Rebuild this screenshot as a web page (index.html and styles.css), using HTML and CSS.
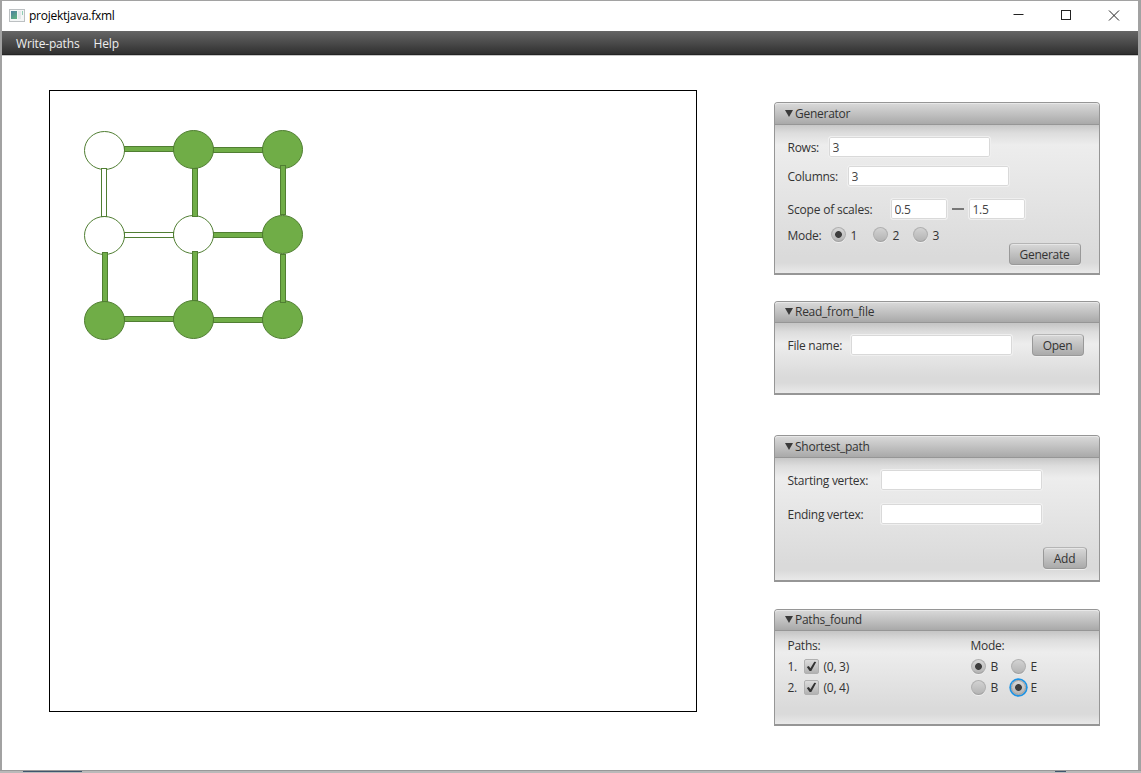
FILE: index.html
```html
<!DOCTYPE html>
<html lang="en">
<head>
<meta charset="utf-8">
<title>projektjava.fxml</title>
<link rel="stylesheet" href="styles.css">
</head>
<body>
<div class="window">
  <header class="titlebar">
    <svg class="app-icon" width="16" height="13" viewBox="0 0 16 13"><defs><linearGradient id="ic" x2="0.6" y2="1"><stop offset="0" stop-color="#4b7f9e"/><stop offset="1" stop-color="#5fae83"/></linearGradient></defs><rect x=".5" y=".5" width="15" height="12" fill="#f4f6f6" stroke="#bcc0c2"/><rect x="2" y="2" width="6" height="8" fill="url(#ic)"/><rect x="9" y="2" width="3" height="8" fill="#e3e8ea"/><rect x="13" y="2" width="1" height="4" fill="#8fcfb4"/></svg>
    <span class="app-name">projektjava.fxml</span>
    <svg class="controls" width="120" height="14" viewBox="0 0 120 14" fill="none" stroke="#222" stroke-width="1"><path d="M0.500 5.500H10.500"/><rect x="48.500" y="1.500" width="9" height="9"/><path d="M96 1.500L106 11.500M106 1.500L96 11.500"/></svg>
  </header>
  <nav class="menubar"><span>Write-paths</span><span>Help</span></nav>
  <main class="content">
    <section class="board">
      <svg width="646" height="620" viewBox="50 91 646 620">
        <g class="node">
          <ellipse class="open" cx="104.500" cy="150.500" rx="20" ry="19"/>
          <ellipse cx="193.500" cy="149.500" rx="20" ry="19"/>
          <ellipse cx="282.500" cy="149.500" rx="20" ry="19"/>
          <ellipse class="open" cx="104.500" cy="235.500" rx="20" ry="19"/>
          <ellipse class="open" cx="193.500" cy="234.500" rx="20" ry="19"/>
          <ellipse cx="282.500" cy="234.500" rx="20" ry="19"/>
          <ellipse cx="104.500" cy="320.500" rx="20" ry="19"/>
          <ellipse cx="193.500" cy="319.500" rx="20" ry="19"/>
          <ellipse cx="282.500" cy="319.500" rx="20" ry="19"/>
        </g>
        <g class="edge">
          <rect x="124.500" y="146.500" width="49" height="5"/>
          <rect x="213.500" y="147.500" width="49" height="5"/>
          <rect class="open" x="124.500" y="232.500" width="49" height="5"/>
          <rect x="213.500" y="232.500" width="49" height="5"/>
          <rect x="124.500" y="316.500" width="49" height="5"/>
          <rect x="213.500" y="317.500" width="49" height="5"/>
          <rect class="open" x="101.500" y="168.500" width="5" height="48"/>
          <rect x="192.500" y="168.500" width="5" height="48"/>
          <rect x="280.500" y="165.500" width="5" height="49"/>
          <rect x="102.500" y="252.500" width="5" height="49"/>
          <rect x="192.500" y="251.500" width="5" height="49"/>
          <rect x="280.500" y="254.500" width="5" height="48"/>
        </g>
      </svg>
    </section>
    <aside class="side">
      <section class="panel generator">
        <h2><i class="tri"></i>Generator</h2>
        <div class="row r-rows"><label class="w-rows">Rows:</label><input class="field" value="3"></div>
        <div class="row r-cols"><label class="w-cols">Columns:</label><input class="field" value="3"></div>
        <div class="row r-scope"><label class="w-scope">Scope of scales:</label><input class="field short" value="0.5"><i class="dash"></i><input class="field short" value="1.5"></div>
        <div class="row r-mode"><label class="w-mode">Mode:</label><i class="radio on"></i><span class="opt">1</span><i class="radio"></i><span class="opt two">2</span><i class="radio"></i><span class="opt">3</span></div>
        <div class="row r-gen"><button class="b-gen">Generate</button></div>
      </section>
      <section class="panel reader">
        <h2><i class="tri"></i>Read_from_file</h2>
        <div class="row r-file"><label class="w-file">File name:</label><input class="field"><button class="b-open">Open</button></div>
      </section>
      <section class="panel shortest">
        <h2><i class="tri"></i>Shortest_path</h2>
        <div class="row r-start"><label class="w-vertex">Starting vertex:</label><input class="field"></div>
        <div class="row r-end"><label class="w-vertex">Ending vertex:</label><input class="field"></div>
        <div class="row r-add"><button class="b-add">Add</button></div>
      </section>
      <section class="panel found">
        <h2><i class="tri"></i>Paths_found</h2>
        <div class="row r-head"><span class="w-paths">Paths:</span><span>Mode:</span></div>
        <div class="row r-path"><span class="num">1.</span><i class="check"><svg width="15" height="15" viewBox="0 0 15 15"><path d="M2.800 8L4.800 6.900L6.400 9.300L10.300 2.800L12.200 3.100L7.300 12H5.600Z"/></svg></i><span class="pair">(0, 3)</span><i class="radio on"></i><span class="opt be">B</span><i class="radio"></i><span class="opt">E</span></div>
        <div class="row r-path"><span class="num">2.</span><i class="check"><svg width="15" height="15" viewBox="0 0 15 15"><path d="M2.800 8L4.800 6.900L6.400 9.300L10.300 2.800L12.200 3.100L7.300 12H5.600Z"/></svg></i><span class="pair">(0, 4)</span><i class="radio"></i><span class="opt be">B</span><i class="radio on focus"></i><span class="opt">E</span></div>
      </section>
    </aside>
  </main>
</div>
<footer class="desktop-edge"><i class="sliver"></i><i class="sliver small"></i></footer>
</body>
</html>
```
FILE: styles.css
```css
* { box-sizing: border-box; }
body { margin: 0; width: 1141px; height: 773px; overflow: hidden; background: #a2a2a2; padding: 1px 2px 0 2px; font: 12px/18px "Open Sans", "Noto Sans", sans-serif; letter-spacing: -0.26px; color: #333; }
.window { width: 1136px; height: 769px; background: #fff; }
.desktop-edge { height: 3px; margin: 0 -2px; border-top: 1px solid #999; background: #b9b9b9; display: flex; padding-left: 23px; }
.sliver { width: 59px; height: 1px; background: #3f566e; }
.sliver.small { width: 11px; margin-left: 973px; }
.titlebar { height: 30px; display: flex; align-items: center; padding-left: 7px; color: #000; }
.app-icon { flex: none; margin-top: -1px; }
.app-name { margin-left: 4px; width: 984px; }
.controls { flex: none; }
.menubar { height: 24px; display: flex; align-items: center; gap: 14px; padding: 2px 0 0 14px; color: #eee; letter-spacing: -0.16px; background: linear-gradient(#666, #303030); border-bottom: 1px solid #242424; box-shadow: 0 1px #c6c6c6; }
.content { display: flex; align-items: flex-start; }
.board { width: 648px; height: 622px; margin: 35px 0 0 47px; border: 1px solid #000; }
.board svg { display: block; }
.node, .edge { fill: #70ad47; stroke: #507e32; stroke-width: 1; }
.open { fill: #fff; }
.side { width: 326px; margin: 47px 0 0 77px; }
.panel { width: 326px; border: 1px solid #969696; border-bottom-width: 2px; border-radius: 4px 4px 0 0; padding-left: 13px; background: linear-gradient(#c7c7c7 22px, #ddd 30px, #ededed 42px, #dadada calc(100% - 16px), #dadada calc(100% - 10px), #e9e9e9); }
.generator { height: 173px; }
.reader { height: 94px; margin-top: 26px; }
.shortest { height: 147px; margin-top: 40px; }
.found { height: 117px; margin-top: 27px; }
.panel h2 { height: 22px; margin: 0 0 0 -13px; padding-left: 10px; display: flex; align-items: center; font-size: 12px; line-height: 20px; font-weight: 400; background: linear-gradient(#dadada, #a9a9a9); border-bottom: 1px solid #969696; border-radius: 3px 3px 0 0; box-shadow: inset 0 1px #e8e8e8; }
.reader h2, .found h2 { height: 21px; }
.tri { width: 0; height: 0; margin: -1px 2px 0 0; border: 4.500px solid transparent; border-top: 7px solid #3a3a3a; border-bottom: 0; }
.tri + * { margin: 0; }
.row { display: flex; height: 22px; align-items: center; white-space: nowrap; margin-left: -0.500px; }
.row > * { flex: none; }
.row > label { padding-top: 1px; }
.field { width: 163px; height: 22px; padding: 0 0 0 4px; border: 1px solid #efefef; border-radius: 3px; background: #fff; box-shadow: inset 0 0 0 1px #d9d9d9; font: inherit; letter-spacing: inherit; color: #444; outline: 0; }
.field.short { width: 58px; }
.dash { width: 12px; height: 2px; margin: 0 4px; background: #777; }
.w-rows { width: 40px; }
.w-cols { width: 59px; }
.w-scope { width: 102px; letter-spacing: -0.180px; }
.w-mode { width: 43px; }
.w-file { width: 62px; }
.w-vertex { width: 92px; }
.w-paths { width: 183px; }
.r-rows { margin-top: 11px; }
.r-cols { margin-top: 7px; }
.r-scope { margin-top: 11px; }
.r-mode { margin-top: 4px; }
.r-mode .radio { margin-top: -1px; }
.r-mode .opt { padding-top: 1px; }
.r-gen { margin-top: -3px; padding-left: 221px; }
.r-file { margin-top: 11px; }
.r-start { margin-top: 11px; }
.r-end { margin-top: 12px; }
.r-add { margin-top: 22px; padding-left: 255px; }
.r-head { margin-top: 4px; height: 21px; }
.r-path { height: 21px; }
button { height: 22px; padding: 1px 0 0; border: 1px solid #999; border-top-color: #b5b5b5; border-radius: 4px; background: linear-gradient(#d8d8d8, #aaa); box-shadow: inset 0 1px #e6e6e6, 0 1px #eee; font: inherit; line-height: 18px; letter-spacing: inherit; color: #333; }
.b-gen { width: 72px; }
.b-open { width: 52px; margin-left: 19px; }
.b-add { width: 44px; }
.radio { width: 15px; height: 15px; border: 1px solid #b0b0b0; border-bottom-color: #a0a0a0; border-radius: 50%; background: linear-gradient(#d2d2d2, #b4b4b4); box-shadow: 0 1px #eee; }
.radio.on { background: radial-gradient(circle, #3d3d3d 3px, transparent 3.800px), linear-gradient(#d8d8d8, #b4b4b4); }
.radio.focus { border-color: #999; box-shadow: 0 0 0 1.700px #1e93e4; }
.opt { width: 22px; margin-left: 5px; }
.opt.two { width: 20px; }
.opt.be { width: 20px; }
.num { width: 16px; }
.check { width: 15px; height: 15px; border: 1px solid #b0b0b0; border-radius: 2px; background: linear-gradient(#dcdcdc, #b2b2b2); }
.check svg { display: block; margin: -1px; fill: #333; }
.pair { width: 147px; margin-left: 5px; }
```
